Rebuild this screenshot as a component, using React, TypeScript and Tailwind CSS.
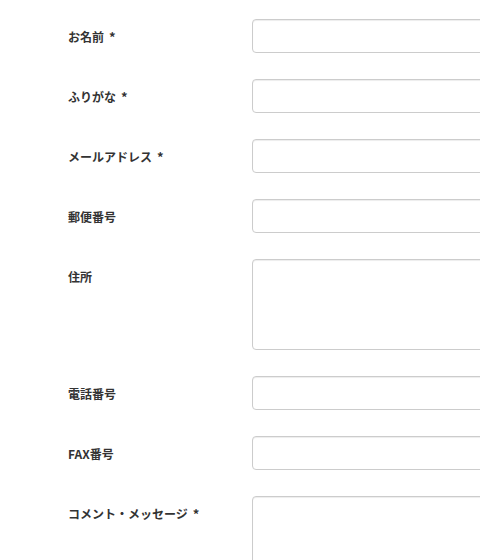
import React from 'react';

type Field = {
    label: string;
    required?: boolean;
    multiline?: boolean;
};

const fields: Field[] = [
    { label: 'お名前', required: true },
    { label: 'ふりがな', required: true },
    { label: 'メールアドレス', required: true },
    { label: '郵便番号' },
    { label: '住所', multiline: true },
    { label: '電話番号' },
    { label: 'FAX番号' },
    { label: 'コメント・メッセージ', required: true, multiline: true },
];

export default function App() {
    return (
        <div
            className="w-[480px] h-[560px] overflow-hidden bg-white pt-[19px] pl-[68px]"
            style={{ fontFamily: '"Noto Sans CJK JP", "Liberation Sans", sans-serif' }}
        >
            <form className="flex flex-col gap-[26px]">
                {fields.map((f) => (
                    <div key={f.label} className="flex items-start">
                        <label className="w-[184px] h-[34px] shrink-0 pt-[2px] text-[12px] font-bold leading-[32px] text-[#333]">
                            {f.label}
                            {f.required && <span className="ml-[5px] text-[13px]">*</span>}
                        </label>
                        {f.multiline ? (
                            <textarea
                                className="w-[320px] h-[91px] shrink-0 resize-none rounded-[4px] border border-[#ccc] bg-white shadow-[inset_0_1px_1px_rgba(0,0,0,0.075)] outline-none"
                            />
                        ) : (
                            <input
                                type="text"
                                className="w-[320px] h-[34px] shrink-0 rounded-[4px] border border-[#ccc] bg-white shadow-[inset_0_1px_1px_rgba(0,0,0,0.075)] outline-none"
                            />
                        )}
                    </div>
                ))}
            </form>
        </div>
    );
}
